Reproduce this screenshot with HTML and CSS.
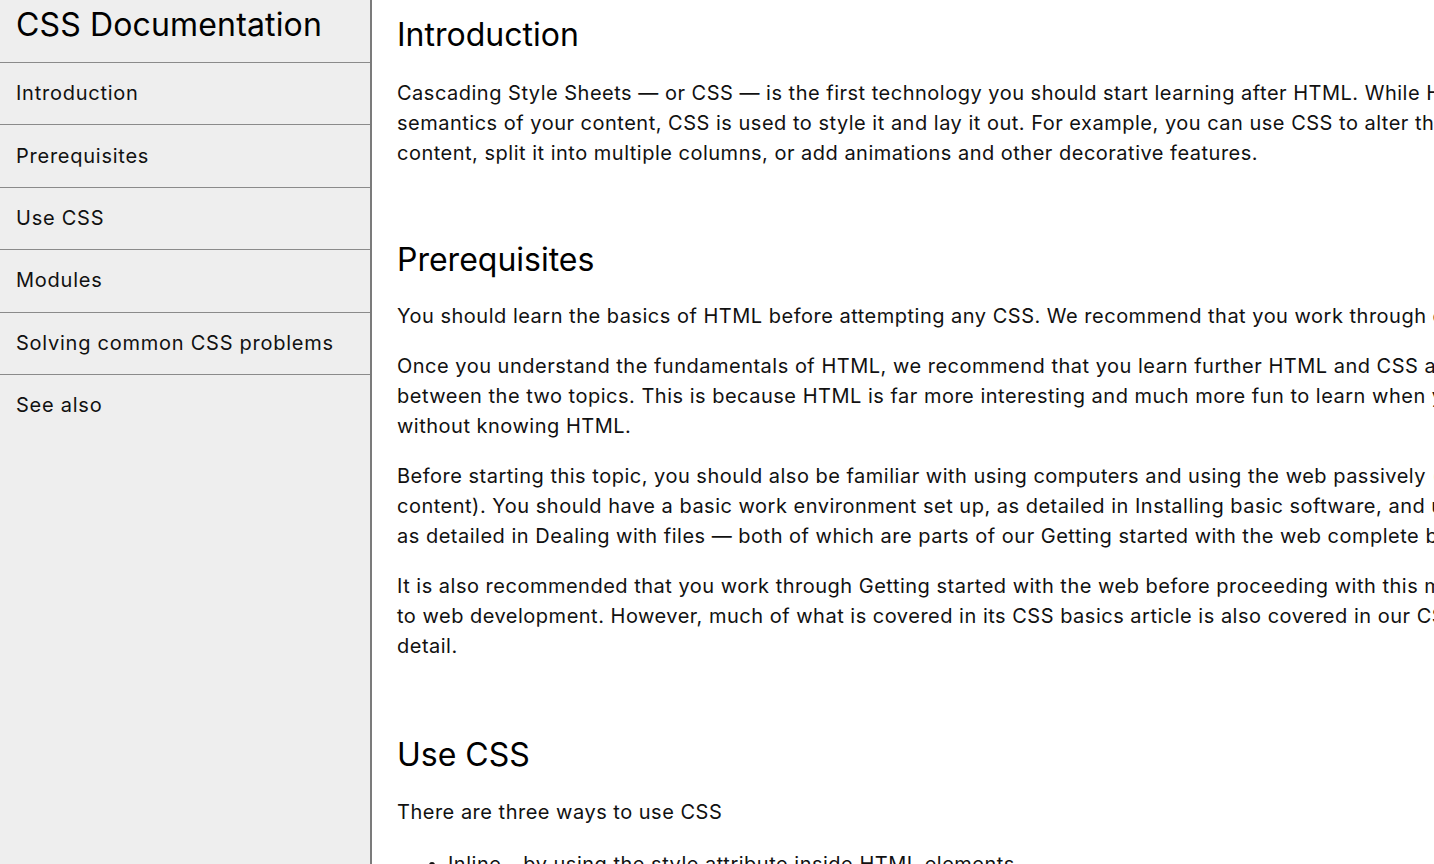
FILE: index.html
```html
<!DOCTYPE html>
<html lang="en">
<head>
<meta charset="utf-8">
<title>CSS Documentation</title>
<link rel="stylesheet" href="styles.css">
</head>
<body>
<nav id="navbar" class="navbar">
  <header class="nav-title">CSS Documentation</header>
  <a class="nav-link" href="#Introduction">Introduction</a>
  <a class="nav-link" href="#Prerequisites">Prerequisites</a>
  <a class="nav-link" href="#Use_CSS">Use CSS</a>
  <a class="nav-link" href="#Modules">Modules</a>
  <a class="nav-link" href="#Solving_common_CSS_problems">Solving common CSS problems</a>
  <a class="nav-link" href="#See_also">See also</a>
</nav>
<main id="main-doc" class="main-doc">
  <section class="main-section" id="Introduction">
    <header class="section-title">Introduction</header>
    <p>Cascading Style Sheets — or CSS — is the first technology you should start learning after HTML. While HTML is used to define the structure and<br>semantics of your content, CSS is used to style it and lay it out. For example, you can use CSS to alter the font, color, size, and spacing of your<br>content, split it into multiple columns, or add animations and other decorative features.</p>
  </section>
  <section class="main-section" id="Prerequisites">
    <header class="section-title">Prerequisites</header>
    <p>You should learn the basics of HTML before attempting any CSS. We recommend that you work through our Introduction to HTML module first.</p>
    <p>Once you understand the fundamentals of HTML, we recommend that you learn further HTML and CSS at the same time, moving back and forth<br>between the two topics. This is because HTML is far more interesting and much more fun to learn when you apply CSS, and you can't really learn CSS<br>without knowing HTML.</p>
    <p>Before starting this topic, you should also be familiar with using computers and using the web passively (i.e., just looking at it, consuming the<br>content). You should have a basic work environment set up, as detailed in Installing basic software, and understand how to create and manage files,<br>as detailed in Dealing with files — both of which are parts of our Getting started with the web complete beginner's module.</p>
    <p>It is also recommended that you work through Getting started with the web before proceeding with this module, especially if you are completely new<br>to web development. However, much of what is covered in its CSS basics article is also covered in our CSS first steps module, albeit in a lot more<br>detail.</p>
  </section>
  <section class="main-section" id="Use_CSS">
    <header class="section-title">Use CSS</header>
    <p>There are three ways to use CSS</p>
    <ul class="ways">
      <li>Inline - by using the style attribute inside HTML elements</li>
      <li>Internal - by using a &lt;style&gt; element in the &lt;head&gt; section</li>
      <li>External - by using a &lt;link&gt; element to link to an external CSS file</li>
    </ul>
  </section>
</main>
</body>
</html>
```
FILE: styles.css
```css
html, body {
  margin: 0;
  padding: 0;
  height: 100%;
}

body {
  display: flex;
  overflow: hidden;
  font-family: "Inter", "DejaVu Sans", sans-serif;
  font-weight: 400;
  color: #000;
  background: #fff;
}

.navbar {
  flex: 0 0 370px;
  height: 100%;
  display: flex;
  flex-direction: column;
  background: #eeeeee;
  border-right: 2px solid #7b7b7b;
}

.nav-title {
  height: 62px;
  box-sizing: border-box;
  padding: 5px 16px 0;
  font-size: 32px;
  line-height: 40px;
  letter-spacing: 0.15px;
  color: #000;
}

.nav-link {
  display: block;
  padding: 15.2px 16px 16.2px;
  border-top: 1px solid #8a8a8a;
  font-size: 20px;
  line-height: 30px;
  letter-spacing: 0.75px;
  color: #111;
  text-decoration: none;
}

.nav-link:last-child {
  padding-bottom: 0;
}

.main-doc {
  flex: 1 1 auto;
  min-width: 0;
  height: 100%;
  overflow: hidden;
  padding: 0 0 0 25px;
}

.main-section {
  display: flex;
  flex-direction: column;
  width: 1800px;
  padding-bottom: 36px;
}

.section-title {
  margin: 17px 0 22px;
  font-size: 32px;
  line-height: 38.5px;
  color: #000;
}

#Introduction .section-title {
  margin: 16px 0 23px;
}

#Use_CSS .section-title {
  margin-top: 19px;
}

.main-section p {
  margin: 0 0 20px;
  font-size: 20px;
  line-height: 30px;
  letter-spacing: 0.5px;
  color: #111;
}

.ways {
  margin: 2px 0 0;
  padding-left: 51px;
  font-size: 20px;
  line-height: 30px;
  letter-spacing: 0.5px;
  color: #111;
}
```
